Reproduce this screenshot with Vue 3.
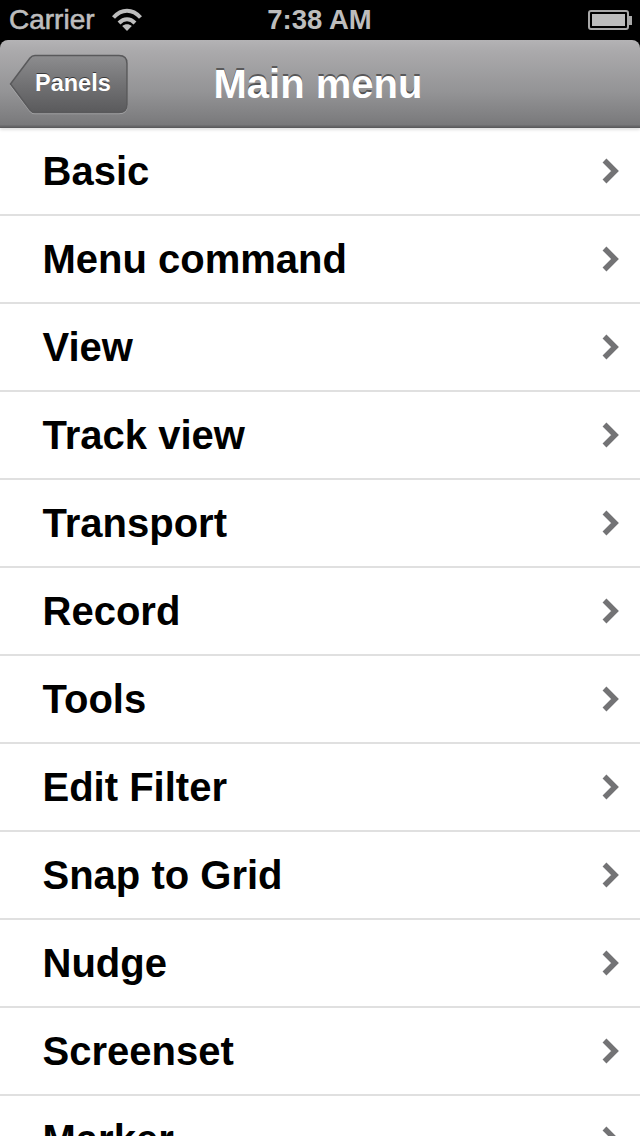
<template>
  <div class="screen">
    <div class="status">
      <div class="status-left">
        <span>Carrier</span>
        <svg class="wifi" width="30" height="23" viewBox="0 0 30 23" aria-hidden="true">
          <path d="M1.5 9.5C9.5 .5 20.5 .5 28.5 9.5" class="arc" />
          <path d="M7 15C12 10 18 10 23 15" class="arc" />
          <path d="M15 23L10.2 18C13 15.8 17 15.8 19.8 18Z" fill="#bdbdbd" />
        </svg>
      </div>
      <span class="clock">7:38 AM</span>
      <div class="battery">
        <div class="battery-body"><div class="battery-fill"></div></div>
        <div class="battery-tip"></div>
      </div>
    </div>

    <div class="navbar">
      <button class="back" type="button">
        <svg class="back-shape" width="120" height="60" viewBox="0 0 120 60" aria-hidden="true">
          <defs>
            <linearGradient id="backFill" x1="0" y1="0" x2="0" y2="1">
              <stop offset="0" stop-color="#8d8d8f" />
              <stop offset="0.5" stop-color="#727274" />
              <stop offset="1" stop-color="#5a5a5c" />
            </linearGradient>
          </defs>
          <path
            d="M1.5 30L21 4Q23 1.5 26 1.5H110Q118 1.5 118 9.5V50.5Q118 58.5 110 58.5H26Q23 58.5 21 56Z"
            fill="url(#backFill)"
            stroke="#59595b"
            stroke-width="1.5"
          />
        </svg>
        <span class="back-label">Panels</span>
      </button>
      <h1 class="title">Main menu</h1>
    </div>

    <div class="list">
      <div v-for="item in items" :key="item" class="row">
        <span class="row-label">{{ item }}</span>
        <svg class="chevron" width="20" height="28" viewBox="0 0 20 28" aria-hidden="true">
          <path d="M3.5 3.5L14 14L3.5 24.5" fill="none" stroke="#737375" stroke-width="5.5" />
        </svg>
      </div>
    </div>
  </div>
</template>

<script setup>
const items = [
  'Basic',
  'Menu command',
  'View',
  'Track view',
  'Transport',
  'Record',
  'Tools',
  'Edit Filter',
  'Snap to Grid',
  'Nudge',
  'Screenset',
  'Marker',
]
</script>

<style>
html,
body {
  margin: 0;
  background: #000;
  overflow: hidden;
}
</style>

<style scoped>
.screen {
  width: 640px;
  height: 1136px;
  overflow: hidden;
  background: #000;
  font-family: "Liberation Sans", Arial, sans-serif;
}
.status {
  height: 40px;
  display: grid;
  grid-template-columns: 1fr auto 1fr;
  align-items: center;
  padding: 0 8px 0 9px;
  color: #bdbdbd;
  font-size: 28px;
  -webkit-text-stroke: 0.6px #bdbdbd;
}
.status-left {
  display: flex;
  align-items: center;
  gap: 17px;
}
.wifi {
  margin-top: -1px;
}
.arc {
  fill: none;
  stroke: #bdbdbd;
  stroke-width: 4;
}
.clock {
  position: relative;
  left: -1px;
  font-size: 27.5px;
  font-weight: 700;
  -webkit-text-stroke: 0;
}
.battery {
  justify-self: end;
  display: flex;
  align-items: center;
}
.battery-body {
  width: 41px;
  height: 20px;
  box-sizing: border-box;
  border: 2px solid #a8a8a8;
  border-radius: 3px;
  padding: 2px;
}
.battery-fill {
  height: 100%;
  background: #bdbdbd;
}
.battery-tip {
  width: 3px;
  height: 9px;
  background: #a8a8a8;
}
.navbar {
  height: 88px;
  box-sizing: border-box;
  position: relative;
  display: flex;
  align-items: center;
  justify-content: center;
  padding-bottom: 1px;
  background: linear-gradient(#b4b3b5 0, #acabad 10%, #939395 60%, #79797b 96%, #565658 100%);
  border-radius: 8px 8px 0 0;
  box-shadow: 0 2px 3px rgba(0, 0, 0, 0.12);
}
.back {
  position: absolute;
  left: 9px;
  top: 14px;
  width: 120px;
  height: 60px;
  padding: 0;
  border: 0;
  background: none;
  font: inherit;
}
.back-shape {
  position: absolute;
  left: 0;
  top: 0;
  filter: drop-shadow(0 1px 0 rgba(255, 255, 255, 0.25));
}
.back-label {
  position: absolute;
  left: 26px;
  top: 14px;
  color: #fff;
  font-size: 23.5px;
  line-height: 30px;
  font-weight: 700;
  text-shadow: 0 -1px 0 rgba(0, 0, 0, 0.55);
}
.title {
  margin: 0 0 0 -4px;
  color: #fff;
  font-size: 40px;
  line-height: 48px;
  font-weight: 700;
  text-shadow: 0 -2px 0 rgba(0, 0, 0, 0.45);
}
.list {
  background: #fff;
}
.row {
  height: 88px;
  box-sizing: border-box;
  display: flex;
  align-items: center;
  justify-content: space-between;
  padding: 0 19px 0 42.5px;
  border-bottom: 2px solid #e0e0e0;
  color: #000;
}
.row-label {
  font-size: 40px;
  line-height: 48px;
  font-weight: 700;
}
</style>
